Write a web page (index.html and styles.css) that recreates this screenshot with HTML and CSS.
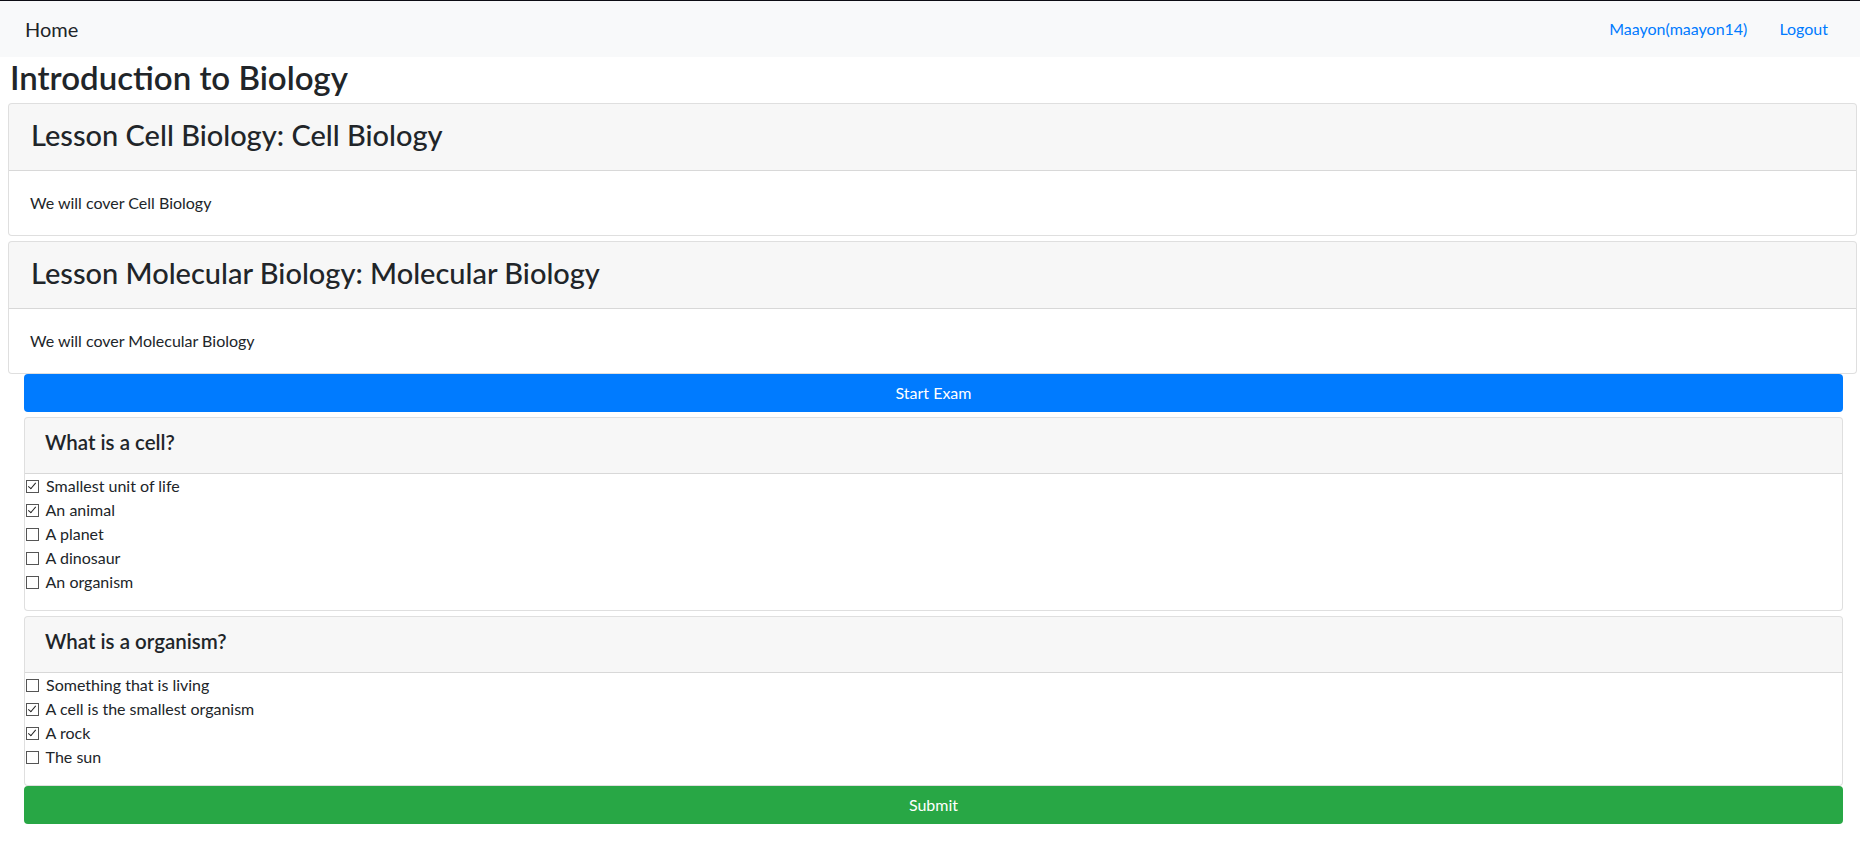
FILE: index.html
```html
<!DOCTYPE html>
<html lang="en">

<head>
    <meta charset="UTF-8">
    <meta name="viewport" content="width=device-width, initial-scale=1.0">
    <title>Introduction to Biology</title>
    <link rel="stylesheet" href="styles.css">
</head>

<body>
    <!-- 顶部导航 -->
    <nav class="navbar">
        <a href="#" class="brand">Home</a>
        <ul class="nav-links">
            <li><a href="#">Maayon(maayon14)</a></li>
            <li><a href="#">Logout</a></li>
        </ul>
    </nav>

    <main class="page">
        <h1 class="course-title">Introduction to Biology</h1>

        <!-- 课程 -->
        <div class="card lesson">
            <div class="card-header">
                <h3>Lesson Cell Biology: Cell Biology</h3>
            </div>
            <div class="card-body">
                <p>We will cover Cell Biology</p>
            </div>
        </div>
        <div class="card lesson">
            <div class="card-header">
                <h3>Lesson Molecular Biology: Molecular Biology</h3>
            </div>
            <div class="card-body">
                <p>We will cover Molecular Biology</p>
            </div>
        </div>

        <!-- 考试 -->
        <div class="exam">
            <button class="btn btn-primary" type="button">Start Exam</button>
            <form class="exam-form">
                <div class="card question">
                    <div class="card-header">
                        <h5>What is a cell?</h5>
                    </div>
                    <div class="answers">
                        <label><input type="checkbox" checked> Smallest unit of life</label>
                        <label><input type="checkbox" checked> An animal</label>
                        <label><input type="checkbox"> A planet</label>
                        <label><input type="checkbox"> A dinosaur</label>
                        <label><input type="checkbox"> An organism</label>
                    </div>
                </div>
                <div class="card question">
                    <div class="card-header">
                        <h5>What is a organism?</h5>
                    </div>
                    <div class="answers">
                        <label><input type="checkbox"> Something that is living</label>
                        <label><input type="checkbox" checked> A cell is the smallest organism</label>
                        <label><input type="checkbox" checked> A rock</label>
                        <label><input type="checkbox"> The sun</label>
                    </div>
                </div>
                <button class="btn btn-success" type="submit">Submit</button>
            </form>
        </div>
    </main>
</body>

</html>
```

FILE: styles.css
```css
* {
    margin: 0;
    padding: 0;
    box-sizing: border-box;
}

body {
    font-family: "Segoe UI", Lato, "Liberation Sans", sans-serif;
    font-size: 16px;
    line-height: 1.5;
    color: #212529;
    background: #fff;
}

a {
    color: #007bff;
    text-decoration: none;
}

/* 顶部导航 */
.navbar {
    height: 57px;
    display: flex;
    align-items: center;
    justify-content: space-between;
    padding: 0 16px;
    background-color: #f8f9fa;
    border-top: 1px solid #0c0c14;
}

.navbar .brand {
    margin-left: 9px;
    font-size: 20px;
    color: #212529;
}

.nav-links {
    display: flex;
    list-style: none;
}

.nav-links a {
    display: block;
    padding: 0 16px;
}

/* 页面主体 */
.page {
    padding: 0 3px 0 8px;
}

.course-title {
    font-size: 33px;
    font-weight: 600;
    line-height: 40px;
    margin: 0 0 6px 2px;
}

/* 卡片 */
.card {
    background: #fff;
    border: 1px solid rgba(0, 0, 0, .125);
    border-radius: 4px;
    overflow: hidden;
}

.card-header {
    padding: 12px 20px;
    background-color: rgba(0, 0, 0, .03);
    border-bottom: 1px solid rgba(0, 0, 0, .125);
}

.lesson .card-header {
    padding: 14px 22px 11px;
}

.card-header h3 {
    font-size: 29px;
    font-weight: 500;
    line-height: 33px;
    margin-bottom: 8px;
}

.card-header h5 {
    font-size: 20.5px;
    font-weight: 600;
    line-height: 24px;
    margin-bottom: 7px;
}

.card-body {
    padding: 20px 21px;
}

.lesson + .lesson {
    margin-top: 5px;
}

/* 考试区域 */
.exam {
    margin: 0 14px 0 16px;
}

.btn {
    display: block;
    width: 100%;
    height: 38px;
    font: inherit;
    color: #fff;
    border: 1px solid transparent;
    border-radius: 4px;
    cursor: pointer;
}

.btn-primary {
    background-color: #007bff;
}

.btn-success {
    background-color: #28a745;
}

.question {
    margin-top: 5px;
}

.answers {
    padding-bottom: 16px;
}

.answers label {
    display: block;
    line-height: 24px;
}

/* 复选框 */
.answers input {
    appearance: none;
    -webkit-appearance: none;
    width: 13px;
    height: 13px;
    margin: 0 3px 0 1px;
    position: relative;
    vertical-align: -1px;
    border: 1px solid #555;
    background: #fff;
}

.answers input:checked::after {
    content: '';
    position: absolute;
    left: 3px;
    top: 0;
    width: 3px;
    height: 7px;
    border-right: 1px solid #222;
    border-bottom: 1px solid #222;
    transform: rotate(40deg);
}
```
